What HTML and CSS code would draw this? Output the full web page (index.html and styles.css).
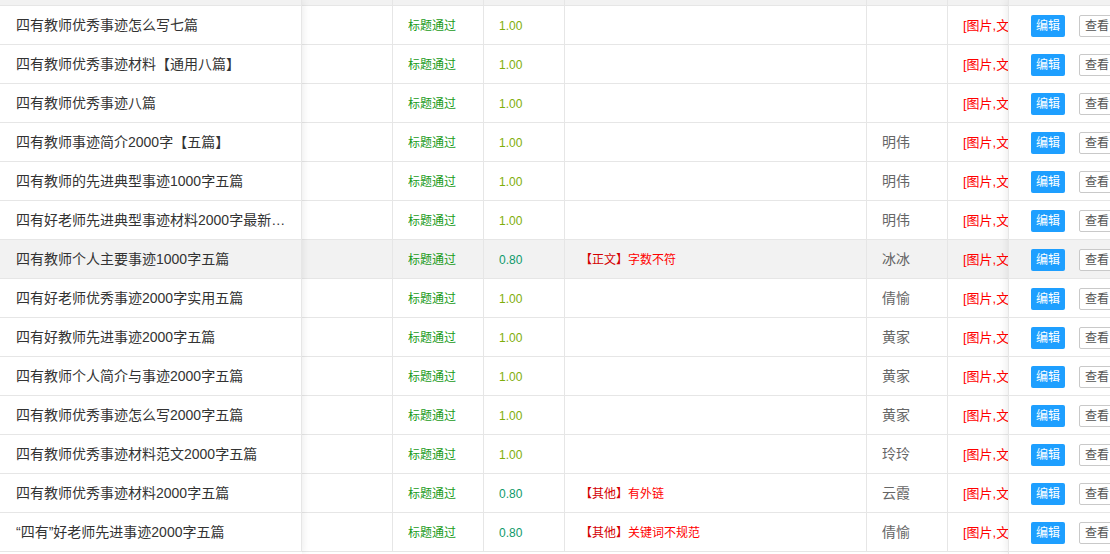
FILE: index.html
```html
<!DOCTYPE html>
<html lang="zh-CN">
<head>
  <meta charset="UTF-8">
  <meta name="viewport" content="width=device-width, initial-scale=1.0">
  <title>文章审核列表</title>
  <link rel="stylesheet" href="styles.css">
</head>
<body>
  <div class="table-box" id="article_table">
    <div class="table-fixed table-fixed--left" id="col_left"></div>
    <div class="table-main" id="col_main"></div>
    <div class="table-fixed table-fixed--right" id="col_right"></div>
  </div>

  <script>
    const rows = [
      { title: '四有教师优秀事迹怎么写七篇', score: '1.00', reason: null, author: '' },
      { title: '四有教师优秀事迹材料【通用八篇】', score: '1.00', reason: null, author: '' },
      { title: '四有教师优秀事迹八篇', score: '1.00', reason: null, author: '' },
      { title: '四有教师事迹简介2000字【五篇】', score: '1.00', reason: null, author: '明伟' },
      { title: '四有教师的先进典型事迹1000字五篇', score: '1.00', reason: null, author: '明伟' },
      { title: '四有好老师先进典型事迹材料2000字最新五篇', score: '1.00', reason: null, author: '明伟' },
      { title: '四有教师个人主要事迹1000字五篇', score: '0.80', reason: ['【正文】', '字数不符'], author: '冰冰', hover: true },
      { title: '四有好老师优秀事迹2000字实用五篇', score: '1.00', reason: null, author: '倩愉' },
      { title: '四有好教师先进事迹2000字五篇', score: '1.00', reason: null, author: '黄家' },
      { title: '四有教师个人简介与事迹2000字五篇', score: '1.00', reason: null, author: '黄家' },
      { title: '四有教师优秀事迹怎么写2000字五篇', score: '1.00', reason: null, author: '黄家' },
      { title: '四有教师优秀事迹材料范文2000字五篇', score: '1.00', reason: null, author: '玲玲' },
      { title: '四有教师优秀事迹材料2000字五篇', score: '0.80', reason: ['【其他】', '有外链'], author: '云霞' },
      { title: '“四有”好老师先进事迹2000字五篇', score: '0.80', reason: ['【其他】', '关键词不规范'], author: '倩愉' }
    ];

    const mainCols = ['col-a', 'col-b', 'col-c', 'col-d', 'col-e', 'col-f'];

    function cell(cls, html) {
      return `<div class="table-cell ${cls}"><div class="cell-text">${html}</div></div>`;
    }

    function buildTable() {
      const left = document.getElementById('col_left');
      const main = document.getElementById('col_main');
      const right = document.getElementById('col_right');

      // header strip (page is scrolled, only its bottom shows)
      left.innerHTML = `<div class="table-row table-row--head">${cell('col-title', '')}</div>`;
      main.innerHTML = `<div class="table-row table-row--head">${mainCols.map(c => cell(c, '')).join('')}</div>`;
      right.innerHTML = `<div class="table-row table-row--head">${cell('col-tool', '')}</div>`;

      for (const row of rows) {
        const hover = row.hover ? ' is-hover' : '';
        const scoreCls = row.score === '1.00' ? 'score score--full' : 'score score--low';
        const reason = row.reason
          ? `<span class="reason-tag">${row.reason[0]}</span><span class="reason-text">${row.reason[1]}</span>`
          : '';

        left.innerHTML += `<div class="table-row${hover}">${cell('col-title title-text', row.title)}</div>`;
        main.innerHTML += `<div class="table-row${hover}">` +
          cell('col-a', '') +
          cell('col-b', '<span class="state-ok">标题通过</span>') +
          cell('col-c', `<span class="${scoreCls}">${row.score}</span>`) +
          cell('col-d', reason) +
          cell('col-e', `<span class="author">${row.author}</span>`) +
          cell('col-f', '<span class="media">[图片,文字]</span>') +
          '</div>';
        right.innerHTML += `<div class="table-row${hover}">` +
          cell('col-tool', '<a class="btn btn--normal">编辑</a><a class="btn btn--primary">查看</a>') +
          '</div>';
      }
    }

    buildTable();
  </script>
</body>
</html>
```

FILE: styles.css
```css
/* General styles */
body {
  margin: 0;
  overflow: hidden;
  background: #fff;
  font-family: "Liberation Sans", "Noto Sans CJK SC", sans-serif;
  font-size: 14px;
  color: #666;
}

.table-box {
  display: flex;
  width: 1110px;
  height: 554px;
  overflow: hidden;
  background: #fff;
}

.table-fixed,
.table-main {
  flex: none;
  background: #fff;
}

.table-fixed--left {
  width: 302px;
  position: relative;
  z-index: 2;
  box-shadow: 1px 0 8px rgba(0,0,0,.08);
}

.table-main {
  width: 706px;
  overflow: hidden;
}

.table-fixed--right {
  width: 178px;
  position: relative;
  z-index: 2;
  border-left: 1px solid #e6e6e6;
  box-shadow: -1px 0 8px rgba(0,0,0,.08);
}

.table-row {
  display: flex;
  height: 38px;
  border-bottom: 1px solid #e6e6e6;
  background: #fff;
}

.table-row--head {
  height: 5px;
  background: #f2f2f2;
}

.table-row.is-hover {
  background: #f2f2f2;
}

.table-cell {
  flex: none;
  box-sizing: border-box;
  border-right: 1px solid #e6e6e6;
  padding: 0 15px;
  overflow: hidden;
}

.cell-text {
  height: 38px;
  line-height: 38px;
  white-space: nowrap;
  overflow: hidden;
  text-overflow: ellipsis;
}

/* column widths */
.col-title { width: 302px; padding-left: 16px; }
.col-a { width: 91px; }
.col-b { width: 91px; }
.col-c { width: 81px; }
.col-d { width: 302px; }
.col-e { width: 81px; }
.col-f { width: 120px; }
.col-tool { width: 177px; padding-left: 22px; border-right: 0; }

.table-row--head .cell-text { height: 5px; }

.title-text { color: #333; }

.state-ok {
  font-size: 12px;
  color: #189a18;
}

.score { font-size: 12px; }
.score--full { color: #7fae0a; }
.score--low { color: #0f9a6a; }

.reason-tag {
  font-size: 12px;
  color: #d40000;
}

.reason-text {
  font-size: 12px;
  color: #f00;
}

.author { color: #666; }

.media {
  font-size: 13px;
  color: #f00;
}

/* buttons */
.btn {
  display: inline-block;
  vertical-align: middle;
  box-sizing: border-box;
  height: 22px;
  line-height: 22px;
  padding: 0 5px;
  font-size: 12px;
  border-radius: 2px;
  cursor: pointer;
}

.btn--normal {
  background-color: #1e9fff;
  color: #fff;
}

.btn--primary {
  margin-left: 14px;
  line-height: 20px;
  background-color: #fff;
  border: 1px solid #c9c9c9;
  color: #555;
}
```
